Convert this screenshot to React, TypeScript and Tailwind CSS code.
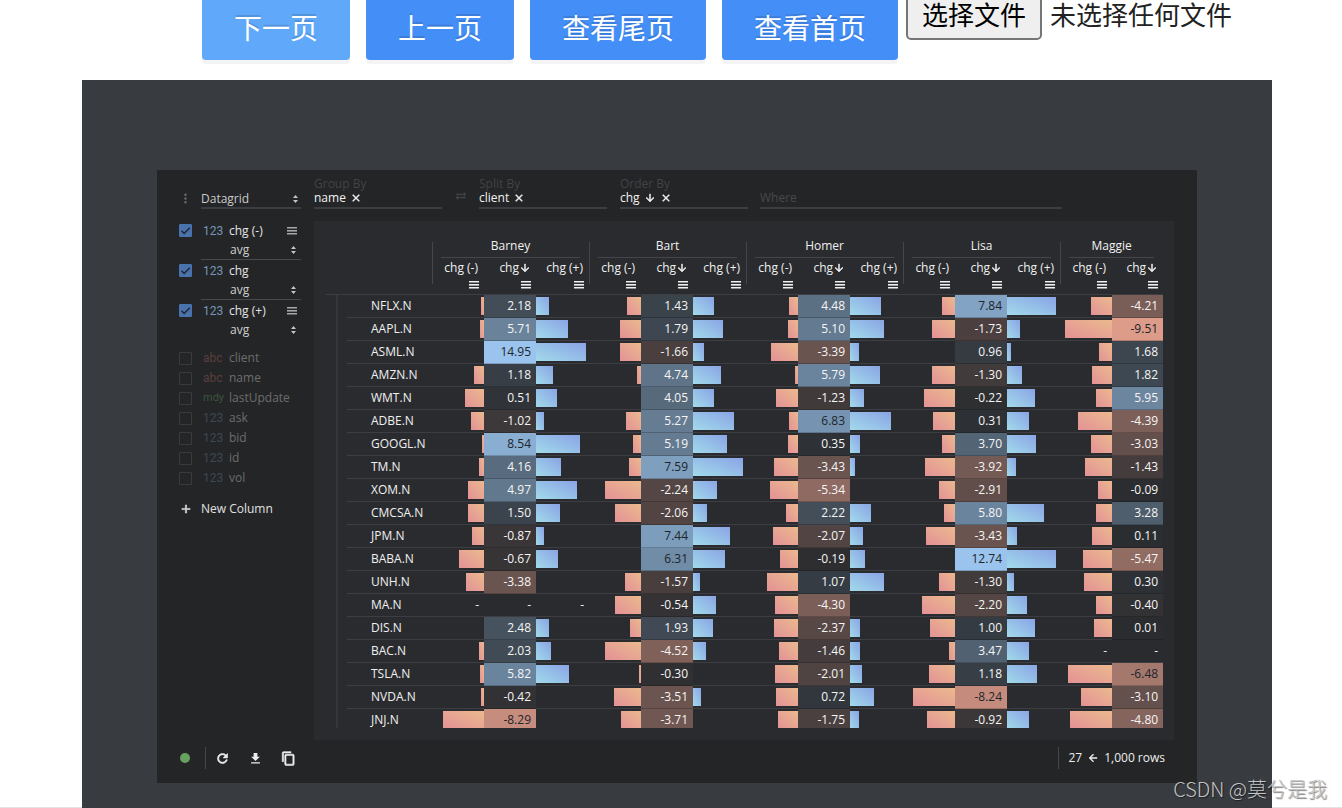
import { useRef } from 'react';
import { MdAdd, MdArrowBack, MdArrowDownward, MdClose, MdContentCopy, MdFileDownload, MdMoreVert, MdRefresh } from 'react-icons/md';

// [bar width of chg (-), chg, bar width of chg (+)], null when there is no data
type Group = [number, string, number] | null;

interface Row {
    name: string;
    groups: Group[];
}

const clients = ['Barney', 'Bart', 'Homer', 'Lisa', 'Maggie'];

const rows: Row[] = [
    { name: 'NFLX.N', groups: [[3, '2.18', 13], [14, '1.43', 21], [9, '4.48', 31], [13, '7.84', 49], [21, '-4.21', 0]] },
    { name: 'AAPL.N', groups: [[4, '5.71', 32], [21, '1.79', 30], [10, '5.10', 34], [23, '-1.73', 13], [47, '-9.51', 0]] },
    { name: 'ASML.N', groups: [[0, '14.95', 50], [21, '-1.66', 11], [27, '-3.39', 9], [0, '0.96', 4], [13, '1.68', 0]] },
    { name: 'AMZN.N', groups: [[10, '1.18', 17], [4, '4.74', 28], [3, '5.79', 30], [23, '-1.30', 15], [20, '1.82', 0]] },
    { name: 'WMT.N', groups: [[19, '0.51', 21], [0, '4.05', 21], [22, '-1.23', 14], [31, '-0.22', 28], [16, '5.95', 0]] },
    { name: 'ADBE.N', groups: [[13, '-1.02', 8], [15, '5.27', 41], [9, '6.83', 41], [22, '0.31', 22], [34, '-4.39', 0]] },
    { name: 'GOOGL.N', groups: [[2, '8.54', 44], [8, '5.19', 34], [10, '0.35', 10], [13, '3.70', 29], [21, '-3.03', 0]] },
    { name: 'TM.N', groups: [[5, '4.16', 25], [12, '7.59', 50], [24, '-3.43', 5], [30, '-3.92', 9], [27, '-1.43', 0]] },
    { name: 'XOM.N', groups: [[16, '4.97', 41], [36, '-2.24', 24], [28, '-5.34', 0], [16, '-2.91', 0], [14, '-0.09', 0]] },
    { name: 'CMCSA.N', groups: [[16, '1.50', 24], [26, '-2.06', 14], [12, '2.22', 21], [11, '5.80', 37], [16, '3.28', 0]] },
    { name: 'JPM.N', groups: [[12, '-0.87', 8], [0, '7.44', 37], [25, '-2.07', 13], [29, '-3.43', 10], [20, '0.11', 0]] },
    { name: 'BABA.N', groups: [[25, '-0.67', 22], [0, '6.31', 32], [18, '-0.19', 15], [0, '12.74', 49], [29, '-5.47', 0]] },
    { name: 'UNH.N', groups: [[18, '-3.38', 0], [16, '-1.57', 7], [31, '1.07', 34], [16, '-1.30', 7], [28, '0.30', 0]] },
    { name: 'MA.N', groups: [null, [26, '-0.54', 23], [23, '-4.30', 0], [33, '-2.20', 20], [16, '-0.40', 0]] },
    { name: 'DIS.N', groups: [[0, '2.48', 13], [11, '1.93', 20], [24, '-2.37', 10], [25, '1.00', 28], [18, '0.01', 0]] },
    { name: 'BAC.N', groups: [[5, '2.03', 15], [36, '-4.52', 13], [19, '-1.46', 10], [6, '3.47', 22], null] },
    { name: 'TSLA.N', groups: [[4, '5.82', 33], [2, '-0.30', 0], [23, '-2.01', 12], [26, '1.18', 30], [44, '-6.48', 0]] },
    { name: 'NVDA.N', groups: [[3, '-0.42', 0], [27, '-3.51', 8], [22, '0.72', 24], [42, '-8.24', 0], [31, '-3.10', 0]] },
    { name: 'JNJ.N', groups: [[41, '-8.29', 0], [20, '-3.71', 0], [20, '-1.75', 9], [28, '-0.92', 22], [42, '-4.80', 0]] },
];

const inactiveColumns = [
    { type: 'abc', color: 'text-[#5a3f3f]', name: 'client' },
    { type: 'abc', color: 'text-[#5a3f3f]', name: 'name' },
    { type: 'mdy', color: 'text-[11px] text-[#3c5540]', name: 'lastUpdate' },
    { type: '123', color: 'text-[#3b4856]', name: 'ask' },
    { type: '123', color: 'text-[#3b4856]', name: 'bid' },
    { type: '123', color: 'text-[#3b4856]', name: 'id' },
    { type: '123', color: 'text-[#3b4856]', name: 'vol' },
];

const base = [42, 44, 47];
const blue = [154, 196, 237];
const red = [230, 161, 142];

const heat = (value: number) => {
    const t = Math.min(Math.abs(value) / 10, 1);
    const end = value < 0 ? red : blue;
    return `rgb(${base.map((c, i) => Math.round(c + (end[i] - c) * t)).join(',')})`;
};

// the first path of a material icon is its empty frame, so only the last one gets a stroke
const bold = '[&>path:last-child]:stroke-1';

const Menu = () => (
    <svg width="10" height="8" viewBox="0 0 10 8" fill="currentColor" aria-hidden="true">
        <rect y="0" width="10" height="1.5" />
        <rect y="3" width="10" height="1.6" />
        <rect y="6" width="10" height="1.5" />
    </svg>
);

const UpDown = () => (
    <svg width="5" height="8" viewBox="0 0 5 8" fill="#c4c5c6" aria-hidden="true">
        <path d="M2.5 0 5 3H0zM2.5 8 0 5h5z" />
    </svg>
);

const Swap = () => (
    <svg width="12" height="8" viewBox="0 0 12 8" fill="none" stroke="currentColor" aria-hidden="true" className="mx-auto">
        <path d="M1 2.3h9.5M8.7.4l2 1.9-2 1.9M11 5.7H1.5M3.3 3.8l-2 1.9 2 1.9" />
    </svg>
);

const ColumnCheckbox = ({ name, active }: { name: string; active: boolean }) => (
    <span className="grid w-[13px] shrink-0">
        <input
            type="checkbox"
            id={`col-${name}`}
            defaultChecked={active}
            className="peer col-start-1 row-start-1 size-[13px] appearance-none rounded-[1px] border border-[#3a3b3e] checked:border-[#4a73ad] checked:bg-[#4a73ad]"
        />
        <svg viewBox="0 0 13 13" className="pointer-events-none col-start-1 row-start-1 hidden size-[13px] peer-checked:block" fill="none" stroke="#20262f" strokeWidth="1.5">
            <path d="M2.5 6.8 5.2 9.5 10.8 3.8" />
        </svg>
    </span>
);

const ActiveColumn = ({ name, menu, last }: { name: string; menu: boolean; last: boolean }) => (
    <div>
        <div className="flex h-[21px] items-center">
            <ColumnCheckbox name={name} active />
            <label htmlFor={`col-${name}`} className="flex flex-1 items-center">
                <span className="ml-[11px] w-[26px] font-['Roboto',sans-serif] text-[#7696b8]">123</span>
                <span className="font-medium text-[#e6e6e6]">{name}</span>
            </label>
            {menu && <button aria-label={`${name} menu`} className="mr-1 text-[#a5a6a7]"><Menu /></button>}
        </div>
        <div className={`ml-[22px] flex h-[19px] items-center border-b pr-[5px] pl-[29px] ${last ? 'border-transparent' : 'border-[#48494d]'}`}>
            <select aria-label={`${name} aggregate`} className="flex-1 appearance-none text-[#cfcfcf]">
                <option>avg</option>
            </select>
            <UpDown />
        </div>
    </div>
);

const Sidebar = () => (
    <aside className="w-[157px] shrink-0 pt-5 pr-[13px] pl-[22px]">
        <div className="flex">
            <MdMoreVert className="mt-px -ml-px size-[15px] text-[#66676b]" />
            <div className="ml-2 flex h-[19px] flex-1 items-center border-b-2 border-[#3c3d42] pr-[3px]">
                <select aria-label="Plugin" className="w-20 flex-1 appearance-none text-[#c9cacb]">
                    <option>Datagrid</option>
                </select>
                <UpDown />
            </div>
        </div>
        <div className="mt-[11px]">
            <ActiveColumn name="chg (-)" menu last={false} />
            <ActiveColumn name="chg" menu={false} last={false} />
            <ActiveColumn name="chg (+)" menu last />
        </div>
        <div className="mt-2">
            {inactiveColumns.map((c) => (
                <div key={c.name} className="flex h-5 items-center">
                    <ColumnCheckbox name={c.name} active={false} />
                    <label htmlFor={`col-${c.name}`} className="flex items-center">
                        <span className={`ml-[11px] w-[26px] font-['Roboto',sans-serif] ${c.color}`}>{c.type}</span>
                        <span className="text-[#6c6d6f]">{c.name}</span>
                    </label>
                </div>
            ))}
        </div>
        <button className="mt-[11px] flex h-5 items-center gap-2 text-[#e0e0e0]">
            <MdAdd className={`size-[14px] ${bold}`} />
            New Column
        </button>
    </aside>
);

const Pivot = ({ label, value, arrow }: { label: string; value: string; arrow?: boolean }) => (
    <div className="w-32 shrink-0">
        <div className="h-3 leading-3 text-[#424348]">{label}</div>
        <div className="flex h-[19px] items-center gap-1 border-b-2 border-[#3c3d42] pb-0.5 font-medium text-[#f2f2f2]">
            {value}
            {arrow && <MdArrowDownward className={`size-3 ${bold}`} />}
            <button aria-label={`Remove ${value}`}>
                <MdClose className={`size-3 ${bold}`} />
            </button>
        </div>
    </div>
);

const TopBar = () => (
    <div className="flex h-[51px] pt-2">
        <Pivot label="Group By" value="name" />
        <button aria-label="Swap" className="w-[37px] pb-[7px] text-[#4b4c50]">
            <Swap />
        </button>
        <Pivot label="Split By" value="client" />
        <div className="w-[13px]" />
        <Pivot label="Order By" value="chg" arrow />
        <input
            aria-label="Where"
            placeholder="Where"
            className="mt-3 mr-[135px] ml-3 h-[19px] min-w-0 flex-1 border-b-2 border-[#3c3d42] pb-0.5 placeholder:text-[#48494d]"
        />
    </div>
);

const Cells = ({ group, hasPlus }: { group: Group; hasPlus: boolean }) => {
    const line = 'h-[23px] border-b border-[#3d3e43] p-0';
    if (!group) {
        return (
            <>
                <td className={`${line} pr-[5px] text-right`}>-</td>
                <td className={`${line} pr-[5px] text-right`}>-</td>
                {hasPlus && <td className={`${line} pr-[5px] text-right`}>-</td>}
            </>
        );
    }
    const [minus, chg, plus] = group;
    const value = Number(chg);
    return (
        <>
            <td className={line}>
                <div className="ml-auto h-[18px] bg-linear-to-tr from-[#e39195] to-[#ebb98e]" style={{ width: minus }} />
            </td>
            <td
                className={`h-[23px] border-b border-black/20 p-0 pr-[5px] text-right ${Math.abs(value) > 6 ? 'text-[#20252b]' : 'text-[#f5f5f5]'}`}
                style={{ backgroundColor: heat(value) }}
            >
                {chg}
            </td>
            {hasPlus && (
                <td className={line}>
                    <div className="h-[18px] bg-linear-to-tr from-[#a2daea] to-[#8aa4e5]" style={{ width: plus }} />
                </td>
            )}
        </>
    );
};

const SubHeader = ({ label, first, sorted }: { label: string; first?: boolean; sorted?: boolean }) => (
    <th className="border-b border-[#3d3e43] p-0 font-medium">
        <div className="flex h-9">
            {first && <span className="mb-[10px] w-px bg-[#45464b]" />}
            <div className="flex flex-1 flex-col items-end pr-[5px] whitespace-nowrap">
                <span className="mr-px flex h-5 items-center leading-5">
                    {label}
                    {sorted && <MdArrowDownward className={`-mr-px size-3 ${bold}`} />}
                </span>
                <button aria-label={`${label} menu`} className="mt-[3px]"><Menu /></button>
            </div>
        </div>
    </th>
);

const DataGrid = () => (
    <div className="mr-[23px] bg-[#2a2b2f] pt-[13px] pb-3 pl-3">
        <div className="h-[494px] overflow-hidden">
            <table className="w-[837px] table-fixed border-separate border-spacing-0 leading-[22px] text-[#f0f0f0]">
                <colgroup>
                    <col className="w-[10px]" />
                    <col className="w-[11px]" />
                    <col className="w-[85px]" />
                    {clients.map((c) => [
                        <col key={`${c}-minus`} className="w-[52px]" />,
                        <col key={`${c}-chg`} className={c === 'Maggie' ? 'w-[51px]' : 'w-[52px]'} />,
                        c !== 'Maggie' && <col key={`${c}-plus`} className="w-[53px]" />,
                    ])}
                </colgroup>
                <thead>
                    <tr>
                        <th colSpan={3} className="p-0" />
                        {clients.map((c) => (
                            <th key={c} colSpan={c === 'Maggie' ? 2 : 3} className="p-0 font-medium">
                                <div className="flex h-6">
                                    <span className="mt-2 w-px bg-[#45464b]" />
                                    <span className="mr-[9px] ml-2 flex-1 border-b border-[#45464b] leading-6">{c}</span>
                                </div>
                            </th>
                        ))}
                    </tr>
                    <tr>
                        <th colSpan={3} className="border-b border-[#3d3e43] p-0" />
                        {clients.map((c) => [
                            <SubHeader key={`${c}-minus`} label="chg (-)" first />,
                            <SubHeader key={`${c}-chg`} label="chg" sorted />,
                            c !== 'Maggie' && <SubHeader key={`${c}-plus`} label="chg (+)" />,
                        ])}
                    </tr>
                </thead>
                <tbody>
                    {rows.map((row) => (
                        <tr key={row.name}>
                            <td className="p-0" />
                            <td className="border-l-2 border-[#36373b] p-0" />
                            <th className="border-b border-[#3d3e43] p-0 pl-6 text-left font-medium">{row.name}</th>
                            {row.groups.map((g, i) => (
                                <Cells key={clients[i]} group={g} hasPlus={clients[i] !== 'Maggie'} />
                            ))}
                        </tr>
                    ))}
                </tbody>
            </table>
        </div>
    </div>
);

const StatusBar = () => (
    <footer className="flex h-[43px] items-center pr-8 pb-[7px] pl-[23px] text-[#eeeeee]">
        <span className="size-[10px] rounded-full bg-[#67a160]" />
        <span className="mr-[9px] ml-[15px] h-[22px] w-px bg-[#45464b]" />
        <button aria-label="Reset"><MdRefresh className={`size-[15px] ${bold}`} /></button>
        <button aria-label="Export" className="ml-[18px]"><MdFileDownload className="size-[15px]" /></button>
        <button aria-label="Copy" className="ml-[18px]"><MdContentCopy className={`size-[15px] ${bold}`} /></button>
        <div className="ml-auto flex h-[22px] items-center gap-[5px] border-l border-[#45464b] pl-[9px] font-medium">
            27
            <MdArrowBack className={`size-3 ${bold}`} />
            1,000 rows
        </div>
    </footer>
);

const PageButton = ({ label, light }: { label: string; light?: boolean }) => (
    <button
        className={`-mt-1 h-16 rounded-[4px] px-8 pt-[3px] text-[28px] whitespace-nowrap text-white shadow-[0_4px_0_rgba(0,0,0,0.045)] [text-shadow:0_-2px_0_rgba(0,0,0,0.12)] ${light ? 'bg-[#5fa8fa]' : 'bg-[#448ef7]'}`}
    >
        {label}
    </button>
);

const Toolbar = () => {
    const fileRef = useRef<HTMLInputElement>(null);

    return (
        <header className="flex h-20 items-start overflow-hidden pl-[202px] font-['Liberation_Sans','Noto_Sans_CJK_SC',sans-serif]">
            <div className="flex gap-4">
                <PageButton label="下一页" light />
                <PageButton label="上一页" />
                <PageButton label="查看尾页" />
                <PageButton label="查看首页" />
            </div>
            <button
                onClick={() => fileRef.current?.click()}
                className="-mt-2 ml-2 h-12 rounded-[5px] border-2 border-[#767676] bg-[#efefef] px-[14px] text-[26px] whitespace-nowrap text-black"
            >
                选择文件
            </button>
            <input ref={fileRef} type="file" aria-label="选择文件" className="hidden" />
            <span className="-mt-2 ml-2 text-[26px] leading-[48px] whitespace-nowrap text-[#222222]">未选择任何文件</span>
        </header>
    );
};

export default function App() {
    return (
        <div className="relative min-h-screen overflow-hidden bg-white">
            <Toolbar />
            <div className="flex">
                <div className="w-[82px] shrink-0 border-b border-[#e3e3e3]" />
                <main className="min-w-0 flex-1 bg-[#383b40] px-[75px] pt-[90px] pb-[25px] font-['Open_Sans',sans-serif] text-xs">
                    <div className="bg-[#242526]">
                        <div className="flex">
                            <Sidebar />
                            <div className="min-w-0 flex-1">
                                <TopBar />
                                <DataGrid />
                            </div>
                        </div>
                        <StatusBar />
                    </div>
                </main>
                <div className="w-[70px] shrink-0 border-b border-[#e3e3e3]" />
            </div>
            <span className="absolute right-[15px] bottom-[5px] font-['Noto_Sans_CJK_SC',sans-serif] text-xl font-light text-[#c4c4c4] [text-shadow:1px_1px_1px_rgba(0,0,0,0.5)]">
                CSDN @莫兮是我
            </span>
        </div>
    );
}
